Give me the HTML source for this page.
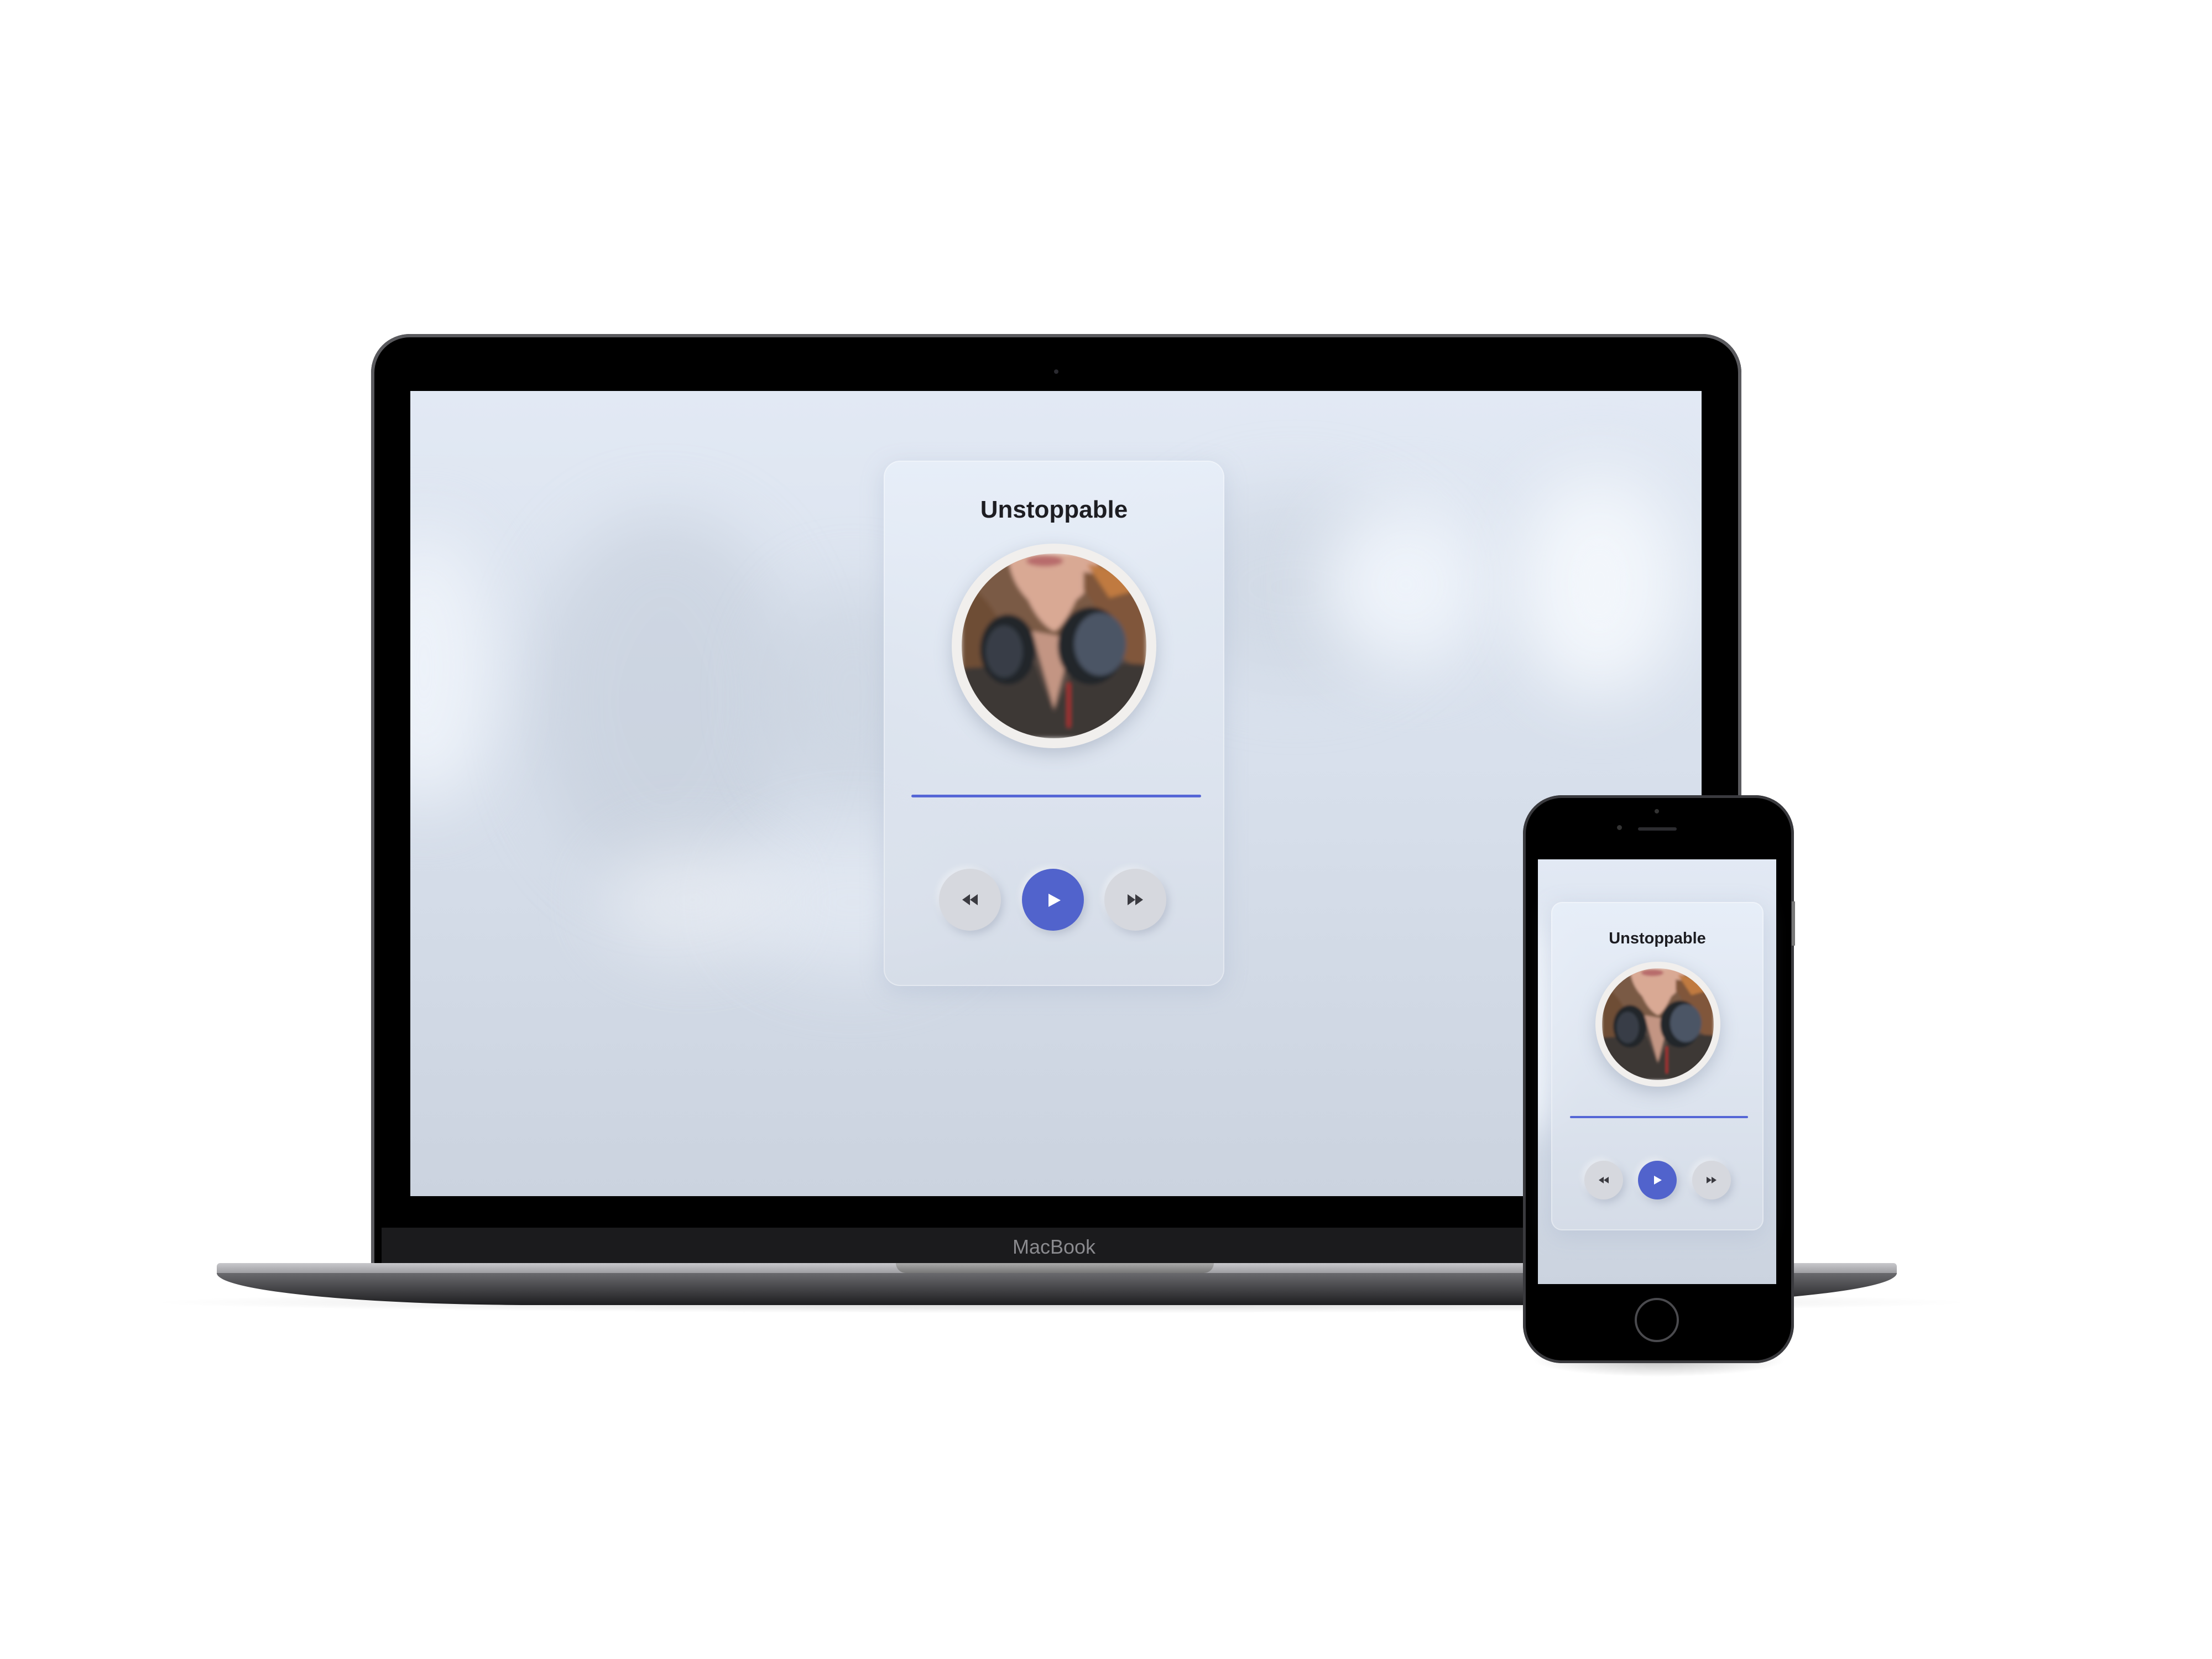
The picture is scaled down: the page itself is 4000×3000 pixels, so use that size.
<!DOCTYPE html>
<html><head><meta charset="utf-8"><style>
*{margin:0;padding:0;box-sizing:border-box}
body{width:4000px;height:3000px;background:#fff;position:relative;overflow:hidden;font-family:"Liberation Sans",sans-serif}
.abs{position:absolute}
.screenbg{overflow:hidden;background:linear-gradient(180deg,#e2e9f4 0%,#d8e0ec 45%,#cbd3df 100%)}
.blob{position:absolute;border-radius:50%;filter:blur(60px)}
.card{position:absolute;border-radius:30px;background:linear-gradient(180deg,rgba(232,239,249,.85),rgba(214,221,232,.85));box-shadow:0 10px 40px rgba(160,175,200,.35),inset 0 0 0 2px rgba(255,255,255,.35)}
.title{position:absolute;left:0;right:0;text-align:center;font-weight:bold;color:#1d1d22}
.btn{position:absolute;border-radius:50%;background:#d6d8de;box-shadow:4px 6px 14px rgba(150,160,180,.45),-4px -4px 10px rgba(255,255,255,.5)}
.play{background:#5163cc}
.bar{position:absolute;background:#5566d6;border-radius:3px}
.ring{position:absolute;border-radius:50%;background:#f1efed;box-shadow:0 10px 30px rgba(140,150,170,.45)}
</style></head><body>

<svg width="0" height="0" style="position:absolute">
<defs>
<clipPath id="cc" clipPathUnits="objectBoundingBox"><circle cx=".5" cy=".5" r=".5"/></clipPath>
<filter id="sb"><feGaussianBlur stdDeviation="1.2"/></filter>
<symbol id="photo" viewBox="0 0 100 100">
<g filter="url(#sb)">
<rect width="100" height="100" fill="#5a4c44"/>
<rect x="0" y="0" width="100" height="45" fill="#7a5a44"/>
<path d="M25 0 H75 Q72 18 62 25 Q55 40 50 42 Q42 38 36 25 Q26 15 25 0Z" fill="#d9a994"/>
<ellipse cx="45" cy="4" rx="10" ry="3" fill="#b86c6c"/>
<path d="M0 15 Q14 22 22 40 L8 70 L0 70Z" fill="#6e4e36"/>
<path d="M66 10 Q88 12 100 28 L100 65 L80 52 Q76 30 66 20Z" fill="#80563a"/>
<path d="M68 6 Q84 6 94 20 L80 24Z" fill="#c07a40"/>
<path d="M0 62 L40 60 L50 86 L62 58 L100 60 L100 100 L0 100Z" fill="#3e3935"/>
<path d="M38 42 L50 84 L60 46Z" fill="#c39583"/>
<ellipse cx="25" cy="52" rx="15" ry="19" fill="#23262c"/>
<ellipse cx="23" cy="53" rx="10" ry="14" fill="#373d47"/>
<ellipse cx="70" cy="50" rx="18" ry="21" fill="#22262c"/>
<ellipse cx="75" cy="49" rx="14" ry="17" fill="#4b5565"/>
<path d="M58 70 L58 94" stroke="#c02a2a" stroke-width="1.5"/>
</g>
</symbol>
</defs></svg>

<div class="abs" style="left:260px;top:2335px;width:3320px;height:40px;border-radius:50%;background:radial-gradient(ellipse,rgba(0,0,0,.18),rgba(0,0,0,0) 70%)"></div>
<div class="abs" style="left:671px;top:604px;width:2478px;height:1690px;border-radius:70px 70px 0 0;background:#000;box-shadow:inset 0 0 0 6px #5a5a5e"></div>
<div class="abs" style="left:1906px;top:668px;width:8px;height:8px;border-radius:50%;background:#2a2a30"></div>
<div class="abs" style="left:690px;top:2220px;width:2440px;height:72px;background:#1b1b1d"></div>
<div class="abs" style="left:1806px;top:2234px;width:200px;text-align:center;color:#8a8a8e;font-size:36px">MacBook</div>
<div class="abs" style="left:392px;top:2284px;width:3038px;height:20px;background:linear-gradient(#c8c8cc,#9a9a9e);border-radius:6px 6px 0 0"></div>
<div class="abs" style="left:1620px;top:2284px;width:575px;height:18px;background:linear-gradient(#aaa,#777);border-radius:0 0 20px 20px"></div>
<div class="abs" style="left:392px;top:2302px;width:3038px;height:58px;background:linear-gradient(#6a6a6e,#1e1e20);border-radius:0 0 600px 600px/0 0 60px 60px"></div>

<div class="abs screenbg" style="left:742px;top:707px;width:2335px;height:1456px">
  <div class="blob" style="left:220px;top:220px;width:480px;height:680px;background:#c0c9d6;opacity:.5"></div>
  <div class="blob" style="left:650px;top:350px;width:300px;height:400px;background:#c6cfdb;opacity:.5"></div>
  <div class="blob" style="left:-100px;top:250px;width:250px;height:500px;background:#edf2f9"></div>
  <div class="blob" style="left:1350px;top:180px;width:500px;height:350px;background:#c9d2de;opacity:.5"></div>
  <div class="blob" style="left:1650px;top:200px;width:300px;height:300px;background:#eef3fa"></div>
  <div class="blob" style="left:2000px;top:150px;width:300px;height:400px;background:#f2f6fb"></div>
  <div class="blob" style="left:600px;top:800px;width:400px;height:250px;background:#e6ecf5;opacity:.7"></div>
  <div class="blob" style="left:350px;top:820px;width:320px;height:200px;background:#f0f3f8;opacity:.6"></div>
</div>
<div class="card" style="left:1598px;top:833px;width:616px;height:950px">
  <div class="title" style="top:64px;font-size:44px">Unstoppable</div>
</div>
<div class="ring" style="left:1721px;top:983px;width:370px;height:370px"></div>
<svg class="abs" style="left:1739px;top:1001px" width="334" height="334"><g clip-path="url(#cc)"><use href="#photo" width="334" height="334"/></g></svg>
<div class="bar" style="left:1648px;top:1437px;width:524px;height:5px"></div>
<div class="btn" style="left:1698px;top:1571px;width:112px;height:112px"></div>
<div class="btn play" style="left:1848px;top:1571px;width:112px;height:112px"></div>
<div class="btn" style="left:1997px;top:1571px;width:112px;height:112px"></div>
<svg class="abs" style="left:1740px;top:1615px" width="30" height="24"><path d="M0 12L14 2V22Z M14 12L28 2V22Z" fill="#3a3a40"/></svg>
<svg class="abs" style="left:1894px;top:1614px" width="26" height="28"><path d="M2 2L24 14L2 26Z" fill="#fff"/></svg>
<svg class="abs" style="left:2039px;top:1615px" width="30" height="24"><path d="M0 2L14 12L0 22Z M14 2L28 12L14 22Z" fill="#3a3a40"/></svg>

<div class="abs" style="left:2770px;top:2430px;width:460px;height:60px;border-radius:50%;background:radial-gradient(ellipse,rgba(0,0,0,.25),rgba(0,0,0,0) 70%)"></div>
<div class="abs" style="left:2754px;top:1438px;width:490px;height:1027px;border-radius:70px;background:#000;box-shadow:inset 0 0 0 5px #3a3a3e"></div>
<div class="abs" style="left:3240px;top:1630px;width:6px;height:80px;background:#777"></div>
<div class="abs" style="left:2992px;top:1463px;width:8px;height:8px;border-radius:50%;background:#333"></div>
<div class="abs" style="left:2924px;top:1492px;width:9px;height:9px;border-radius:50%;background:#333"></div>
<div class="abs" style="left:2962px;top:1496px;width:70px;height:6px;border-radius:3px;background:#2c2c30"></div>
<div class="abs screenbg" style="left:2781px;top:1554px;width:431px;height:768px">
  <div class="blob" style="left:-60px;top:100px;width:120px;height:400px;background:#eef3fa;filter:blur(30px)"></div>
</div>
<div class="card" style="left:2805px;top:1631px;width:384px;height:594px;border-radius:20px">
  <div class="title" style="top:50px;font-size:29px">Unstoppable</div>
</div>
<div class="ring" style="left:2885px;top:1739px;width:226px;height:226px"></div>
<svg class="abs" style="left:2897px;top:1751px" width="202" height="202"><g clip-path="url(#cc)"><use href="#photo" width="202" height="202"/></g></svg>
<div class="bar" style="left:2839px;top:2018px;width:322px;height:4px"></div>
<div class="btn" style="left:2865px;top:2099px;width:70px;height:70px"></div>
<div class="btn play" style="left:2962px;top:2099px;width:70px;height:70px"></div>
<div class="btn" style="left:3060px;top:2099px;width:70px;height:70px"></div>
<svg class="abs" style="left:2891px;top:2127px" width="18" height="14"><path d="M0 7L9 1V13Z M9 7L18 1V13Z" fill="#3a3a40"/></svg>
<svg class="abs" style="left:2990px;top:2125px" width="16" height="18"><path d="M1 1L15 9L1 17Z" fill="#fff"/></svg>
<svg class="abs" style="left:3086px;top:2127px" width="18" height="14"><path d="M0 1L9 7L0 13Z M9 1L18 7L9 13Z" fill="#3a3a40"/></svg>
<div class="abs" style="left:2956px;top:2347px;width:80px;height:80px;border-radius:50%;border:4px solid #4a4a4e"></div>
</body></html>
